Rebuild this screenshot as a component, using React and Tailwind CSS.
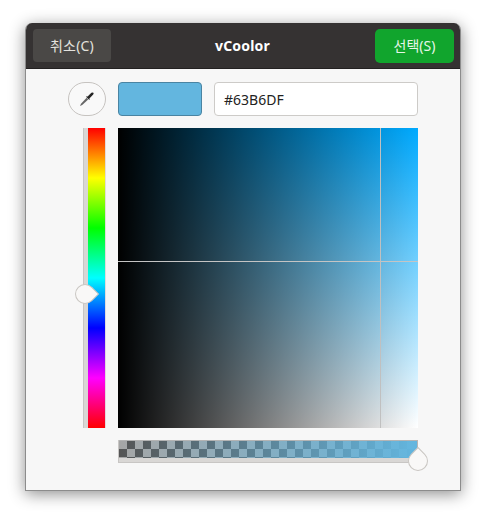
export default function App() {
  const color = "#63B6DF";

  return (
    <div className="w-[486px] h-[519px] bg-white pl-[26px] pt-[23px] font-['Noto_Sans','Noto_Sans_CJK_KR',sans-serif]">
      <div className="w-[434px] h-[467px] rounded-t-[7px] overflow-hidden bg-[#f7f7f7] border-x border-b border-[#8c8c8c] shadow-[0_3px_16px_rgba(0,0,0,0.45)] -ml-px box-content">
        {/* HEADER */}
        <div className="h-[46px] bg-[#353232] flex items-center justify-between pl-[7px] pr-[6px] border-b border-[#232121]">
          <button className="w-[78px] h-[33px] rounded-[4px] bg-[#4a4846] text-[#e4e2de] text-[14px] tracking-[0.2px]">
            취소(C)
          </button>
          <div className="text-white text-[14px] font-bold tracking-[0.2px] -ml-px">vCoolor</div>
          <button className="w-[79px] h-[34px] rounded-[5px] bg-[#11a52d] text-[#e6f6e8] text-[14px]">
            선택(S)
          </button>
        </div>

        <div className="grid grid-cols-[38px_300px] gap-x-[12px] gap-y-[12px] pl-[42px] pt-[13px]">
          {/* TOP ROW */}
          <button className="w-[38px] h-[34px] rounded-full border border-[#c6c3c0] bg-[#f9f9f9] flex items-center justify-center">
            <svg width="16" height="16" viewBox="0 0 16 16">
              <path d="M1 15 L2 12.8 L7.6 6.8 L9.2 8.4 L3.2 14 Z" fill="#666" />
              <path d="M6.8 5.4 L8.6 5.6 L12.4 1.8 Q13.6 1.2 14.4 1.8 Q15 2.6 14.2 3.6 L10.4 7.4 L10.6 9.2 Z" fill="#262626" />
            </svg>
          </button>
          <div className="flex gap-[12px]">
            <div className="w-[84px] h-[34px] rounded-[4px] border border-[#4a84a2] bg-[#63b6df]" />
            <div className="w-[204px] h-[34px] rounded-[4px] border border-[#cdcbc8] bg-white flex items-center pl-[9px] text-[14px] text-[#222]">
              {color}
            </div>
          </div>

          {/* HUE */}
          <div className="flex justify-end">
            <div className="relative w-[23px] h-[300px] flex">
              <div className="w-[5px] bg-[#d9d7d5] border-l border-[#c8c6c4]" />
              <div className="w-[18px] border-r border-[#e2dcdc] bg-[linear-gradient(to_bottom,#f00,#ff0,#0f0,#0ff,#00f,#f0f,#f00)]" />
              <div className="absolute left-[-8px] top-[155.5px] w-[20px] h-[20px] rotate-45 rounded-full rounded-tr-none border border-[#c9c6c2] bg-[#f9f8f7]" />
            </div>
          </div>

          {/* SATURATION / VALUE */}
          <div className="relative w-[300px] h-[300px] bg-[linear-gradient(to_right,#000,transparent),linear-gradient(to_top,#fff,#00aaff)]">
            <div className="absolute left-0 right-0 top-[133px] h-px bg-[#c4c4c4]" />
            <div className="absolute top-0 bottom-0 left-[262px] w-px bg-[#c0c0c0]" />
          </div>

          {/* ALPHA */}
          <div className="col-start-2 relative w-[300px] h-[23px] bg-[#d9d7d5] border-b border-[#c8c6c4] border-l">
            <div className="h-[18px] border-t border-r border-[#b4b4b4] bg-[linear-gradient(to_right,transparent,#63b6df),repeating-conic-gradient(#555_0_25%,#a6a6a6_0_50%)] bg-[length:100%_100%,16px_16px]" />
            <div className="absolute left-[289px] top-[11px] w-[20px] h-[20px] -rotate-45 rounded-full rounded-tr-none border border-[#c9c6c2] bg-[#f9f8f7]" />
          </div>
        </div>
      </div>
    </div>
  );
}
